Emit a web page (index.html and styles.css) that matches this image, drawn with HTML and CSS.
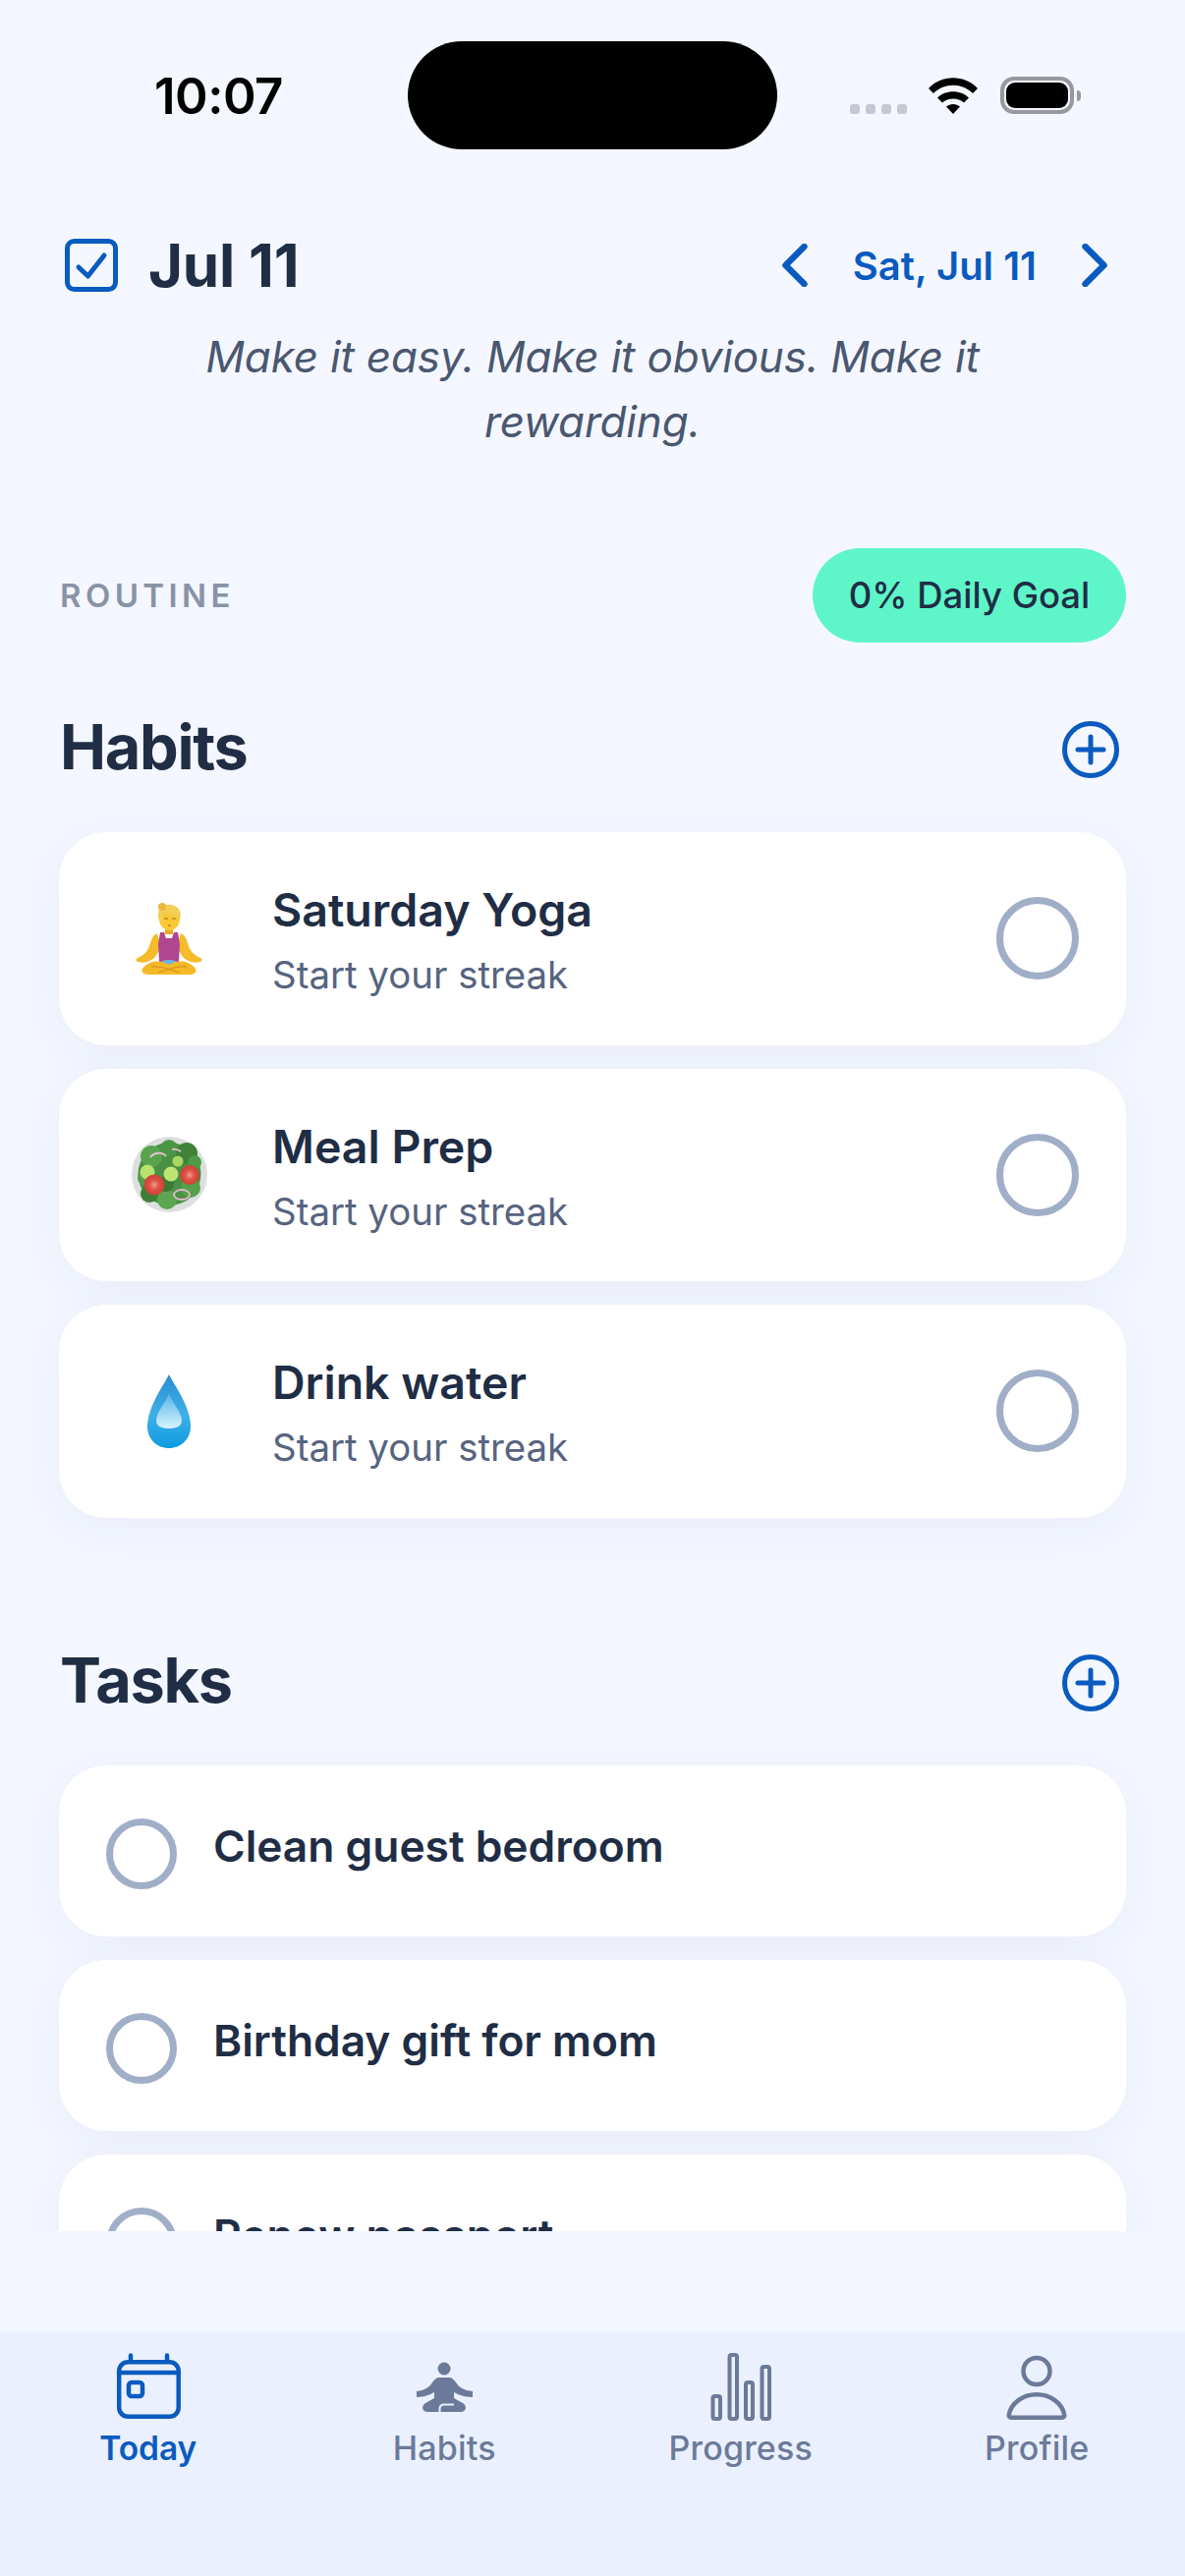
FILE: index.html
```html
<!DOCTYPE html>
<html lang="en">
<head>
<meta charset="utf-8">
<title>Today</title>
<link rel="stylesheet" href="styles.css">
</head>
<body>
<div class="page">
  <div class="status">
    <div class="time">10:07</div>
    <div class="island"></div>
    <div class="dots"><i></i><i></i><i></i><i></i></div>
    <svg class="wifi" viewBox="0 0 50 37"><path d="M0 11C13-3.5 37-3.5 50 11L45 16C34 5 16 5 5 16Z"/><path d="M9 20.5C17 12 33 12 41 20.5L36 25.5C30 20 20 20 14 25.5Z"/><path d="M18 29.5C22 26 28 26 32 29.5L25 37Z"/></svg>
    <div class="battery"><div class="battery-fill"></div></div>
    <div class="nub"></div>
  </div>
  <main class="content">
    <header class="topbar">
      <div class="title-group">
        <svg class="check" viewBox="0 0 54 54"><rect x="2.5" y="2.5" width="49" height="49" rx="7" class="blue-line"/><path d="M14 29l9.500 9L40 17" class="blue-line"/></svg>
        <h1 class="title">Jul 11</h1>
      </div>
      <div class="date-nav">
        <svg class="chev" viewBox="0 0 26 44"><path d="M22.500 3L3.500 22l19 19" class="blue-line thick"/></svg>
        <span class="date-label">Sat, Jul 11</span>
        <svg class="chev" viewBox="0 0 26 44"><path d="M3.500 3l19 19-19 19" class="blue-line thick"/></svg>
      </div>
    </header>
    <p class="quote">Make it easy. Make it obvious. Make it rewarding.</p>
    <div class="routine-row">
      <span class="routine">ROUTINE</span>
      <span class="pill">0% Daily Goal</span>
    </div>

    <section class="habits">
      <div class="section-head">
        <h2 class="section-title">Habits</h2>
        <svg class="plus" viewBox="0 0 60 60"><circle cx="30" cy="30" r="26.500" class="blue-line"/><path d="M17 30h26M30 17v26" class="blue-line"/></svg>
      </div>
      <div class="list">
        <article class="card habit">
          <div class="emoji">
            <svg class="emoji-yoga" viewBox="0 0 68 73">
              <path d="M22 31C17 33 16 38 14 44C12 50 7 54 2 56C0 57 0 60 3 60C9 62 16 59 20 55L26 45Z" fill="#F4BB2A"/>
              <path d="M46 31C51 33 52 38 54 44C56 50 61 54 66 56C68 57 68 60 65 60C59 62 52 59 48 55L42 45Z" fill="#F4BB2A"/>
              <rect x="30" y="24" width="8" height="8" fill="#E9A923"/>
              <path d="M25 30H29L31 36H37L39 30H43L45 42L44 60H24L23 42Z" fill="#B0468E"/>
              <ellipse cx="34" cy="61" rx="9" ry="3" fill="#6CB6E8"/>
              <path d="M7 67C13 59 24 57 34 63C44 57 55 59 61 67C63 71 59 73 53 73H15C9 73 5 71 7 67Z" fill="#F5B927"/>
              <path d="M16 65C25 64 36 68 45 71M52 65C43 64 32 68 23 71" stroke="#CF8C24" stroke-width="1" fill="none"/>
              <ellipse cx="34.500" cy="16" rx="10.500" ry="12" fill="#FAC833"/>
              <path d="M23 13C22 5 30 1 36 2C43 3 47 8 45.500 15C41 14 34 11 29 10C28 13 27 17 26 20C24 19 23 16 23 13Z" fill="#F2CF55"/>
              <circle cx="27" cy="4" r="4" fill="#EBB838"/>
              <path d="M29 16h4M37 16h4M33 23h3" stroke="#9A6A1C" stroke-width="1" fill="none"/>
            </svg>
          </div>
          <div class="habit-text">
            <div class="habit-name">Saturday Yoga</div>
            <div class="habit-sub">Start your streak</div>
          </div>
          <div class="ring ring-lg"></div>
        </article>
        <article class="card habit">
          <div class="emoji">
            <svg class="emoji-salad" viewBox="0 0 77 77">
              <defs>
                <radialGradient id="tomato"><stop offset="0" stop-color="#F3A08E"/><stop offset="0.45" stop-color="#DF5547"/><stop offset="1" stop-color="#CE3F36"/></radialGradient>
              </defs>
              <circle cx="38.500" cy="38.500" r="38.500" fill="#DDDFDE"/>
              <circle cx="38.500" cy="38" r="32" fill="#4A9043"/>
              <circle cx="20" cy="20" r="11" fill="#58A44E"/>
              <circle cx="38" cy="12" r="9" fill="#4C9545"/>
              <circle cx="56" cy="17" r="11" fill="#3F8238"/>
              <circle cx="64" cy="26" r="7" fill="#4F9A47"/>
              <circle cx="60" cy="52" r="10" fill="#55A04A"/>
              <circle cx="14" cy="42" r="8" fill="#559E4B"/>
              <circle cx="18" cy="58" r="9" fill="#3E7F37"/>
              <circle cx="36" cy="64" r="10" fill="#5BA651"/>
              <circle cx="35" cy="48" r="8" fill="#3B7A35"/>
              <circle cx="16" cy="36" r="7.500" fill="#B9E16E"/>
              <circle cx="40" cy="38" r="7.500" fill="#BDE473"/>
              <circle cx="47" cy="25" r="5.500" fill="#A8D862"/>
              <circle cx="23" cy="49" r="10.500" fill="url(#tomato)"/>
              <circle cx="59" cy="39" r="10" fill="url(#tomato)"/>
              <ellipse cx="51" cy="59" rx="8" ry="5" fill="none" stroke="#E4B7CF" stroke-width="1.800"/>
              <path d="M19 21C22 16 31 15 35 20M41 13C44 12 47 13 50 15" fill="none" stroke="#EBC3D6" stroke-width="1.800"/>
            </svg>
          </div>
          <div class="habit-text">
            <div class="habit-name">Meal Prep</div>
            <div class="habit-sub">Start your streak</div>
          </div>
          <div class="ring ring-lg"></div>
        </article>
        <article class="card habit">
          <div class="emoji">
            <svg class="emoji-drop" viewBox="0 0 44 75">
              <defs>
                <linearGradient id="dropFill" x1="0" y1="0" x2="0" y2="1">
                  <stop offset="0" stop-color="#2A8DD0"/>
                  <stop offset="0.55" stop-color="#3FB0E8"/>
                  <stop offset="1" stop-color="#0D9AE0"/>
                </linearGradient>
                <linearGradient id="dropGlow" x1="0" y1="0" x2="0" y2="1">
                  <stop offset="0" stop-color="#56B7EA"/>
                  <stop offset="1" stop-color="#D8F3FC"/>
                </linearGradient>
              </defs>
              <path d="M22 0C26 9 44 32 44 53C44 66 34 75 22 75C10 75 0 66 0 53C0 32 18 9 22 0Z" fill="url(#dropFill)"/>
              <path d="M22 20C26 29 35 39 35 47C35 53 29 55 22 55C15 55 9 53 9 47C9 39 18 29 22 20Z" fill="url(#dropGlow)"/>
            </svg>
          </div>
          <div class="habit-text">
            <div class="habit-name">Drink water</div>
            <div class="habit-sub">Start your streak</div>
          </div>
          <div class="ring ring-lg"></div>
        </article>
      </div>
    </section>

    <section class="tasks">
      <div class="section-head">
        <h2 class="section-title">Tasks</h2>
        <svg class="plus" viewBox="0 0 60 60"><circle cx="30" cy="30" r="26.500" class="blue-line"/><path d="M17 30h26M30 17v26" class="blue-line"/></svg>
      </div>
      <div class="list">
        <article class="card task"><div class="ring ring-sm"></div><div class="task-name">Clean guest bedroom</div></article>
        <article class="card task"><div class="ring ring-sm"></div><div class="task-name">Birthday gift for mom</div></article>
        <article class="card task"><div class="ring ring-sm"></div><div class="task-name">Renew passport</div></article>
      </div>
    </section>
  </main>
  <nav class="tabbar">
    <div class="tab tab-active">
      <svg class="tab-icon" viewBox="0 0 72 72" fill="none" stroke="currentColor" stroke-width="4.500"><rect x="6.200" y="10.200" width="60.500" height="55.500" rx="9"/><path d="M6 21H67M18 3.500V9M55 3.500V9" stroke-linecap="round"/><rect x="16" y="31" width="14" height="14" rx="3"/></svg>
      <span class="tab-label">Today</span>
    </div>
    <div class="tab">
      <svg class="tab-icon" viewBox="0 0 72 72"><circle cx="36" cy="17" r="6.500" fill="currentColor"/><path d="M31 26H41C44 26 46 28 48 31C51 36 56 39 65 40V46C56 46 50 43 46 41V47L55 52C60 55 58 61 53 61H19C14 61 12 55 17 52L26 47V41C22 43 16 46 8 46V40C16 39 21 36 24 31C26 28 28 26 31 26Z" fill="currentColor"/><path d="M31.500 61V58C31.500 55 33 53.500 36 53.500H46" fill="none" stroke="#EAF0FE" stroke-width="2"/></svg>
      <span class="tab-label">Habits</span>
    </div>
    <div class="tab">
      <svg class="tab-icon" viewBox="0 0 72 72" fill="none" stroke="currentColor" stroke-width="4"><rect x="7.500" y="45" width="7.500" height="23" rx="2"/><rect x="24.500" y="3" width="7.500" height="65" rx="2"/><rect x="41" y="31" width="7" height="37" rx="2"/><rect x="57.500" y="15" width="7.500" height="53" rx="2"/></svg>
      <span class="tab-label">Progress</span>
    </div>
    <div class="tab">
      <svg class="tab-icon" viewBox="0 0 72 72" fill="none" stroke="currentColor" stroke-width="4.500"><circle cx="36" cy="19.500" r="13.500"/><path d="M10 66.700H62C63.500 66.700 64.500 65.500 64.200 64C62 52 50 43.300 36 43.300C22 43.300 10 52 7.800 64C7.500 65.500 8.500 66.700 10 66.700Z"/></svg>
      <span class="tab-label">Profile</span>
    </div>
  </nav>
</div>
</body>
</html>
```
FILE: styles.css
```css
* { box-sizing: border-box; }
html, body { margin: 0; padding: 0; }
body { font-family: "Inter", "Liberation Sans", sans-serif; color: #1F2D45; background: #F4F7FF; }
h1, h2, p { margin: 0; }

.page { width: 1206px; height: 2622px; display: flex; flex-direction: column; overflow: hidden; background: #F4F7FF; }

.status { display: flex; align-items: center; height: 110px; margin-top: 42px; flex: none; }
.time { width: 415px; padding-left: 157px; font-size: 51px; font-weight: 600; color: #000; letter-spacing: -0.5px; }
.island { width: 376px; height: 110px; border-radius: 55px; background: #000; flex: none; }
.dots { display: flex; gap: 6px; margin: 28px 0 0 74px; }
.dots i { width: 10px; height: 10px; border-radius: 3px; background: #C5C8D0; }
.wifi { width: 50px; height: 37px; margin: 0 0 0 22px; fill: #000; }
.battery { width: 75px; height: 38px; margin: 0 0 0 23px; border: 4px solid #98989F; border-radius: 14px; padding: 2px; }
.battery-fill { width: 100%; height: 100%; border-radius: 9px; background: #000; }
.nub { width: 4px; height: 11px; margin: 0 0 0 3px; border-radius: 0 4px 4px 0; background: #98989F; }

.content { flex: 1; min-height: 0; overflow: hidden; margin-bottom: 102px; }

.blue-line { fill: none; stroke: #0A5BBF; stroke-width: 5; stroke-linecap: round; stroke-linejoin: round; }
.thick { stroke-width: 6.500; }

.topbar { display: flex; align-items: center; justify-content: space-between; padding: 91px 79px 0 66px; }
.title-group { display: flex; align-items: center; gap: 31px; }
.check { width: 54px; height: 54px; }
.title { font-size: 60px; font-weight: 700; line-height: 54px; color: #1F2D45; letter-spacing: -0.2px; }
.date-nav { display: flex; align-items: center; gap: 46px; }
.chev { width: 26px; height: 44px; }
.date-label { font-size: 40px; font-weight: 600; color: #0A5BBF; }

.quote { width: 860px; margin: 33px auto 0; font-size: 44px; line-height: 66px; font-style: italic; text-align: center; color: #4A5770; letter-spacing: -0.2px; }

.routine-row { display: flex; align-items: center; justify-content: space-between; padding: 0 60px 0 61px; margin-top: 96px; }
.routine { font-size: 33px; font-weight: 600; letter-spacing: 4.400px; color: #8A93A6; }
.pill { display: flex; align-items: center; justify-content: center; width: 319px; height: 96px; border-radius: 48px; background: #5EF6C8; font-size: 36.500px; font-weight: 500; color: #1F2D45; }

.section-head { display: flex; align-items: center; justify-content: space-between; padding: 0 66px 0 61px; height: 80px; }
.section-title { font-size: 63px; font-weight: 700; line-height: 80px; letter-spacing: -1.300px; padding-bottom: 2px; color: #1F2D45; }
.plus { width: 60px; height: 60px; margin-top: 4px; }
.habits { margin-top: 67px; }
.tasks { margin-top: 126.500px; }

.list { display: flex; flex-direction: column; gap: 24px; margin-top: 46px; padding: 0 60px; }
.card { display: flex; align-items: center; background: #FFF; border-radius: 48px; box-shadow: 0 12px 48px rgba(40, 60, 120, 0.05); }
.habit { height: 216.500px; padding: 0 48px 0 40px; }
.emoji { width: 144px; display: flex; justify-content: center; flex: none; }
.emoji-yoga { width: 68px; height: 73px; }
.emoji-salad { width: 77px; height: 77px; }
.emoji-drop { width: 44px; height: 75px; }
.habit-text { flex: 1; margin-left: 33px; padding-top: 8px; }
.habit-name { font-size: 46.500px; font-weight: 600; line-height: 60px; color: #1F2D45; }
.habit-sub { margin-top: 6px; font-size: 38.400px; line-height: 60px; color: #566480; }

.ring { border-radius: 50%; flex: none; border: 7px solid #A0AEC8; }
.ring-lg { width: 84px; height: 84px; }
.ring-sm { width: 72px; height: 72px; margin: 6px 37px 0 0; }

.task { height: 174px; padding: 0 48px; }
.task-name { font-size: 44.300px; font-weight: 600; line-height: 60px; color: #1F2D45; margin-top: -11px; }

.tabbar { flex: none; height: 249px; display: flex; background: #EAF0FE; }
.tab { flex: 1; display: flex; flex-direction: column; align-items: center; padding-top: 21px; color: #6B7A99; }
.tab-active { color: #0A5BBF; }
.tab-icon { width: 72px; height: 72px; }
.tab-label { margin-top: 4px; font-size: 34px; line-height: 44px; font-weight: 500; letter-spacing: 0.2px; }
.tab-active .tab-label { font-size: 33.500px; font-weight: 600; letter-spacing: 0; }
```
